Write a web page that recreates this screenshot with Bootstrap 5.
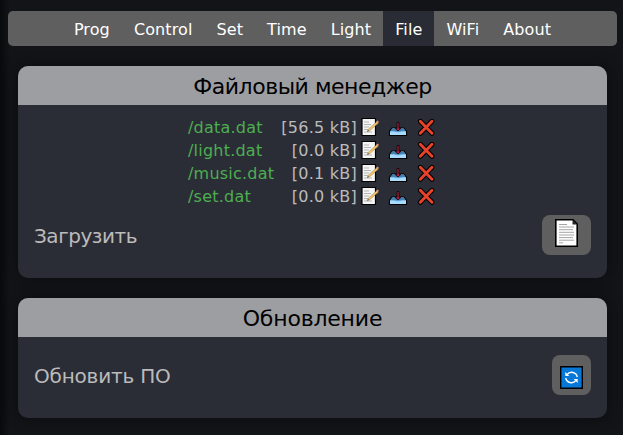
<!DOCTYPE html>
<html lang="ru">
<head>
<meta charset="utf-8">
<meta name="viewport" content="width=device-width, initial-scale=1">
<title>Файловый менеджер</title>
<link href="https://cdn.jsdelivr.net/npm/bootstrap@5.3.0/dist/css/bootstrap.min.css" rel="stylesheet">
<style>
body{background:linear-gradient(90deg,#08090b 0,#121417 10px,#121417 100%);font-family:"DejaVu Sans",Verdana,sans-serif;font-size:16px;color:#bbb;height:435px;overflow:hidden}
.menu{margin:11px 6px 0 8px;height:35px;background:#5f5f5f;border-radius:5px}
.menu .nav-link{padding:0 12px;line-height:37px;height:35px;color:#fff;letter-spacing:.11px}
.menu .nav-link.active{background:#2a2c35}
.panels{margin:20px 16px 0 18px;gap:20px}
.panel{background:#2b2d36;border:0;border-radius:10px;overflow:hidden;color:#bbb;box-shadow:0 0 14px #0b0c0e}
.panel-title{height:39px;line-height:41px;font-size:22px;color:#000;background:#9d9ea2}
.t1{letter-spacing:-.47px}
.t2{letter-spacing:-.2px}
.l1{letter-spacing:-.45px}
.l2{letter-spacing:-.2px}
.l1,.l2{padding-top:2px}
.files{width:248px;margin:11px 0 0 170px}
.file-row{height:23px;line-height:23px}
.file-name{color:#4caf50;letter-spacing:.22px}
.file-size{width:83px;margin-left:auto;margin-right:3px;letter-spacing:.25px}
.icons{gap:8px;height:21px}
.icons svg{width:20px;height:20px;display:block}
.label-row{padding:0 16px;height:40px;font-size:20px}
.upload{margin-top:7px;margin-bottom:23px}
.update{margin-top:18px;margin-bottom:23px}
.tool{background:#5f5f5f;border:0;border-radius:8px;height:40px;padding:0}
.tool-file{width:49px}
.tool-file svg{margin-top:4px}
.tool-sync{width:39px}
.tool-sync svg{margin-top:11px}
</style>
</head>
<body>
<svg class="d-none" aria-hidden="true">
<symbol id="memo" viewBox="0 0 20 20"><path d="M2 1.500h13.500v17H2z" fill="#f4f4f4" stroke="#000" stroke-width="1.200"/><path d="M4 5h5M4 7.500h7M4 10h5M4 12.500h4M4 15h8" stroke="#b5b5b5"/><path d="M7.500 14.500l1-2.500 8.500-7.500 1.500 1.500-8.500 7.500z" fill="#f3c568" stroke="#8a6b3a" stroke-width=".4"/><path d="M16.300 4.700l1.300-1.200 1.300 1.300-1.100 1.200z" fill="#f08a80"/><path d="M7.300 14.700l.6-1.600 1 1z" fill="#333"/></symbol>
<symbol id="inbox" viewBox="0 0 20 20"><path d="M4 11h12l2.500 3.500v4h-17v-4z" fill="#83c3f0" stroke="#000" stroke-width="1.200"/><path d="M4.300 11.500h11.400l2 3H2.300z" fill="#4381b5"/><path d="M2 14.500h4.500c1 1.300 6 1.300 7 0H18v3.500H2z" fill="#a8dcff"/><path d="M9 5.500h2v5.800h2l-3 2.700-3-2.700h2z" fill="#b51f3c" stroke="#16080d" stroke-width=".9"/></symbol>
<symbol id="cross" viewBox="0 0 20 20"><path d="M4.300 4.300l11.700 12M16 4.300L4.300 16.300" stroke="#000" stroke-width="5" stroke-linecap="round"/><path d="M4.300 4.300l11.700 12M16 4.300L4.300 16.300" stroke="#e8432a" stroke-width="2.900" stroke-linecap="round"/></symbol>
</svg>
<nav class="menu nav justify-content-center flex-nowrap">
<a class="nav-link" href="#">Prog</a><a class="nav-link" href="#">Control</a><a class="nav-link" href="#">Set</a><a class="nav-link" href="#">Time</a><a class="nav-link" href="#">Light</a><a class="nav-link active" href="#">File</a><a class="nav-link" href="#">WiFi</a><a class="nav-link" href="#">About</a>
</nav>
<main class="panels d-flex flex-column">
<section class="panel card">
<div class="panel-title text-center"><span class="t1">Файловый менеджер</span></div>
<div class="files">
<div class="file-row d-flex align-items-center"><span class="file-name">/data.dat</span><span class="file-size text-end">[56.5 kB]</span><span class="icons d-flex"><svg><use href="#memo"/></svg><svg><use href="#inbox"/></svg><svg><use href="#cross"/></svg></span></div>
<div class="file-row d-flex align-items-center"><span class="file-name">/light.dat</span><span class="file-size text-end">[0.0 kB]</span><span class="icons d-flex"><svg><use href="#memo"/></svg><svg><use href="#inbox"/></svg><svg><use href="#cross"/></svg></span></div>
<div class="file-row d-flex align-items-center"><span class="file-name">/music.dat</span><span class="file-size text-end">[0.1 kB]</span><span class="icons d-flex"><svg><use href="#memo"/></svg><svg><use href="#inbox"/></svg><svg><use href="#cross"/></svg></span></div>
<div class="file-row d-flex align-items-center"><span class="file-name">/set.dat</span><span class="file-size text-end">[0.0 kB]</span><span class="icons d-flex"><svg><use href="#memo"/></svg><svg><use href="#inbox"/></svg><svg><use href="#cross"/></svg></span></div>
</div>
<div class="label-row upload d-flex align-items-center justify-content-between"><span class="l1">Загрузить</span>
<button class="tool tool-file d-flex justify-content-center" type="button" aria-label="Загрузить"><svg width="23" height="28" viewBox="0 0 23 28"><path d="M.8.800H18l4.200 4.200v22.200H.8z" fill="#fff" stroke="#000" stroke-width="1.600"/><path d="M17.500 1v4.500H22z" fill="#222"/><path d="M4 5.500h8M4 8h15M4 10.700h14M4 13.300h15M4 16h15M4 18.600h14M4 21.200h15M4 23.800h4" stroke="#a5a5a5"/></svg></button></div>
</section>
<section class="panel card">
<div class="panel-title text-center"><span class="t2">Обновление</span></div>
<div class="label-row update d-flex align-items-center justify-content-between"><span class="l2">Обновить ПО</span>
<button class="tool tool-sync d-flex justify-content-center" type="button" aria-label="Обновить ПО"><svg width="23" height="23" viewBox="0 0 23 23"><path d="M.7.700h21.600v21.600H.7z" fill="#0878d8" stroke="#000" stroke-width="1.400"/><path d="M7 8.600A5.800 5.800 0 0 1 17.300 11M16 14.400A5.800 5.800 0 0 1 5.700 12" fill="none" stroke="#fff" stroke-width="1.400"/><path d="M5.300 6v4h4zM17.700 17v-4h-4z" fill="#fff"/></svg></button></div>
</section>
</main>
<script src="https://cdn.jsdelivr.net/npm/bootstrap@5.3.0/dist/js/bootstrap.bundle.min.js"></script>
</body>
</html>
